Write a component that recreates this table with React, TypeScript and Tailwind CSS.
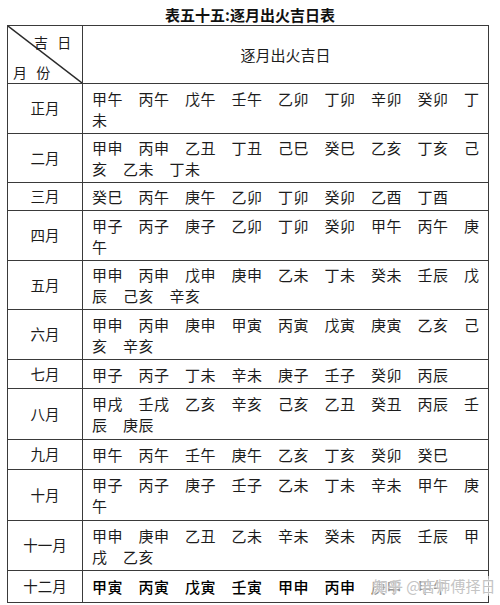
import React from "react";

const S = "\u3000";

type Row = { m: string; h: number; lines: string[][]; bold?: boolean };

const rows: Row[] = [
  { m: "正月", h: 50, lines: [["甲午", "丙午", "戊午", "壬午", "乙卯", "丁卯", "辛卯", "癸卯", "丁"], ["未"]] },
  { m: "二月", h: 49, lines: [["甲申", "丙申", "乙丑", "丁丑", "己巳", "癸巳", "乙亥", "丁亥", "己"], ["亥", "乙未", "丁未"]] },
  { m: "三月", h: 28, lines: [["癸巳", "丙午", "庚午", "乙卯", "丁卯", "癸卯", "乙酉", "丁酉"]] },
  { m: "四月", h: 50, lines: [["甲子", "丙子", "庚子", "乙卯", "丁卯", "癸卯", "甲午", "丙午", "庚"], ["午"]] },
  { m: "五月", h: 49, lines: [["甲申", "丙申", "戊申", "庚申", "乙未", "丁未", "癸未", "壬辰", "戊"], ["辰", "己亥", "辛亥"]] },
  { m: "六月", h: 50, lines: [["甲申", "丙申", "庚申", "甲寅", "丙寅", "戊寅", "庚寅", "乙亥", "己"], ["亥", "辛亥"]] },
  { m: "七月", h: 29, lines: [["甲子", "丙子", "丁未", "辛未", "庚子", "壬子", "癸卯", "丙辰"]] },
  { m: "八月", h: 51, lines: [["甲戌", "壬戌", "乙亥", "辛亥", "己亥", "乙丑", "癸丑", "丙辰", "壬"], ["辰", "庚辰"]] },
  { m: "九月", h: 30, lines: [["甲午", "丙午", "壬午", "庚午", "乙亥", "丁亥", "癸卯", "癸巳"]] },
  { m: "十月", h: 51, lines: [["甲子", "丙子", "庚子", "壬子", "乙未", "丁未", "辛未", "甲午", "庚"], ["午"]] },
  { m: "十一月", h: 50, lines: [["甲申", "庚申", "乙丑", "乙未", "辛未", "癸未", "丙辰", "壬辰", "甲"], ["戌", "乙亥"]] },
  { m: "十二月", h: 31, lines: [["甲寅", "丙寅", "戊寅", "壬寅", "甲申", "丙申", "庚申", "甲午"]], bold: true },
];

export default function App() {
  return (
    <div
      className="relative w-[500px] h-[605px] bg-white text-[#1c1c1c] overflow-hidden"
      style={{ fontFamily: '"Noto Sans CJK SC", "Noto Sans", sans-serif' }}
    >
      <div className="h-[25px] flex items-center justify-center pt-[3px] text-[15px] font-bold leading-none text-[#111]">
        表五十五:逐月出火吉日表
      </div>
      <div className="ml-[7px] w-[482px] border-[1.5px] border-[#3a3a3a]">
        <div className="grid grid-cols-[75px_1fr] h-[58px] border-b-[1.5px] border-[#3a3a3a]">
          <div className="relative border-r-[1.5px] border-[#3a3a3a] text-[14px] leading-none">
            <svg className="absolute inset-0 w-full h-full" viewBox="0 0 100 100" preserveAspectRatio="none">
              <line x1="0" y1="0" x2="100" y2="100" stroke="#2a2a2a" strokeWidth="1.4" vectorEffect="non-scaling-stroke" />
            </svg>
            <div className="absolute left-[26px] top-[9px] tracking-[3px]">吉 日</div>
            <div className="absolute left-[5px] top-[39px] tracking-[3px]">月 份</div>
          </div>
          <div className="flex items-center justify-center text-[15px] leading-none">逐月出火吉日</div>
        </div>
        {rows.map((r, i) => (
          <div
            key={r.m}
            className={`grid grid-cols-[75px_1fr] ${i < rows.length - 1 ? "border-b-[1.5px]" : ""} border-[#3a3a3a]`}
            style={{ height: r.h }}
          >
            <div className="border-r-[1.5px] border-[#3a3a3a] flex items-center justify-center text-[14.5px] leading-none">
              {r.m}
            </div>
            <div
              className={`relative flex flex-col justify-center pl-[9px] text-[15px] tracking-[0.5px] leading-[21px] ${
                r.bold ? "font-medium text-black" : ""
              }`}
            >
              {r.lines.map((ln, j) => (
                <div key={j} className="whitespace-nowrap">
                  {ln.join(S)}
                </div>
              ))}
            </div>
          </div>
        ))}
      </div>
      <div
        className="absolute left-[372px] top-[576px] text-[15px] leading-[20px] text-[#c4c4c4] whitespace-nowrap bg-white/55 px-[1px]"
        style={{ textShadow: "0 0 2px #fff, 0 0 2px #fff" }}
      >
        知乎 @吉师傅择日
      </div>
    </div>
  );
}
